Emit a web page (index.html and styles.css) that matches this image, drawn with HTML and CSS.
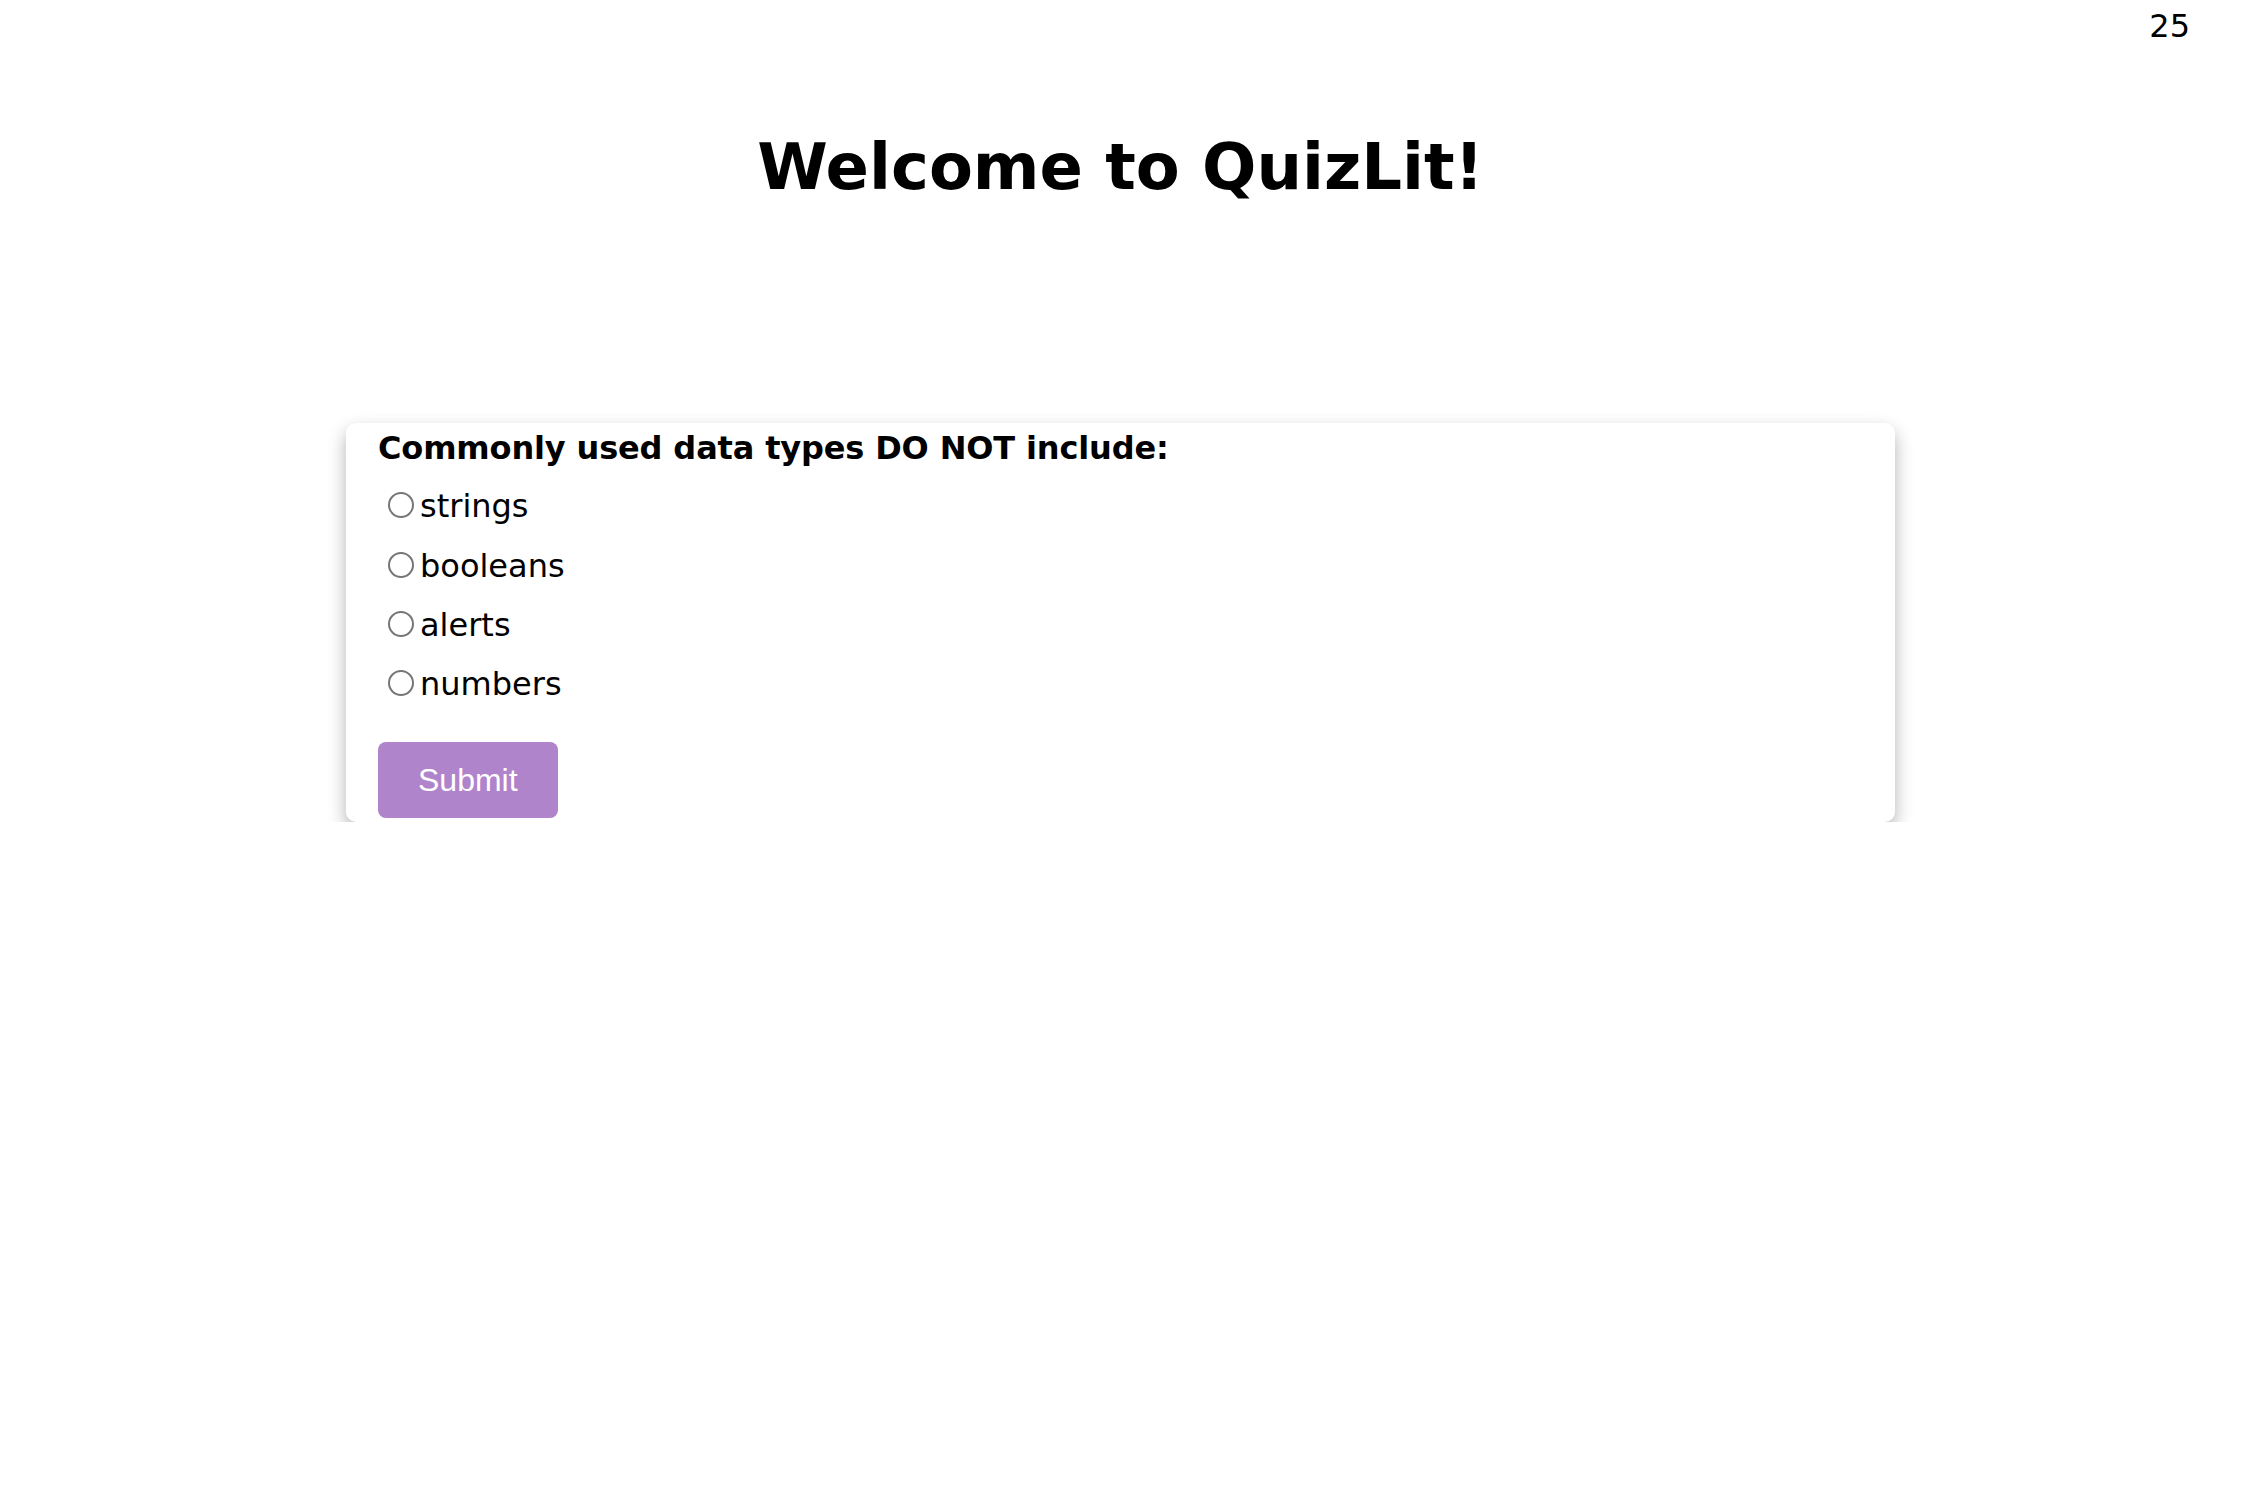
FILE: index.html
```html
<!DOCTYPE html>
<html lang="en">
<head>
<meta charset="utf-8">
<title>QuizLit</title>
<link rel="stylesheet" href="styles.css">
</head>
<body>
<header class="topbar">
  <span class="timer">25</span>
</header>
<h1 class="title">Welcome to QuizLit!</h1>
<main class="card">
  <p class="question">Commonly used data types DO NOT include:</p>
  <label class="option"><input type="radio" name="answer" value="strings">strings</label>
  <label class="option"><input type="radio" name="answer" value="booleans">booleans</label>
  <label class="option"><input type="radio" name="answer" value="alerts">alerts</label>
  <label class="option"><input type="radio" name="answer" value="numbers">numbers</label>
  <button class="submit" type="button">Submit</button>
</main>
</body>
</html>
```

FILE: styles.css
```css
html, body {
  margin: 0;
  padding: 0;
  background: #ffffff;
}

body {
  font-family: "DejaVu Sans", Verdana, sans-serif;
  color: #000000;
  padding-right: 5px;
}

.topbar {
  display: flex;
  justify-content: flex-end;
  padding: 7px 51px 0 0;
  font-size: 32px;
  line-height: 38px;
}

.title {
  margin: 85px 0 0;
  text-align: center;
  font-size: 64px;
  line-height: 74px;
  font-weight: bold;
}

.card {
  width: 1549px;
  margin: 219px auto 0;
  box-sizing: border-box;
  padding: 6px 32px 4px;
  background: #ffffff;
  border-radius: 10px;
  box-shadow: 0 8px 18px 0 rgba(0, 0, 0, 0.3);
  display: flex;
  flex-direction: column;
  align-items: flex-start;
}

.question {
  margin: 0;
  font-size: 32px;
  line-height: 38px;
  font-weight: bold;
  letter-spacing: -0.15px;
}

.option {
  margin-top: 21.4px;
  font-size: 32px;
  line-height: 38px;
}

.question + .option {
  margin-top: 20.3px;
}

.option input {
  appearance: none;
  -webkit-appearance: none;
  display: inline-block;
  vertical-align: baseline;
  box-sizing: border-box;
  width: 26px;
  height: 26px;
  margin: 0 6px -1px 10px;
  border: 2px solid #767676;
  border-radius: 50%;
  background: #ffffff;
}

.submit {
  margin-top: 39px;
  padding: 19px 40px;
  font-family: "Liberation Sans", Arial, sans-serif;
  font-size: 32px;
  line-height: 38px;
  color: #ffffff;
  background: #af84cb;
  border: none;
  border-radius: 8px;
  cursor: pointer;
}
```
